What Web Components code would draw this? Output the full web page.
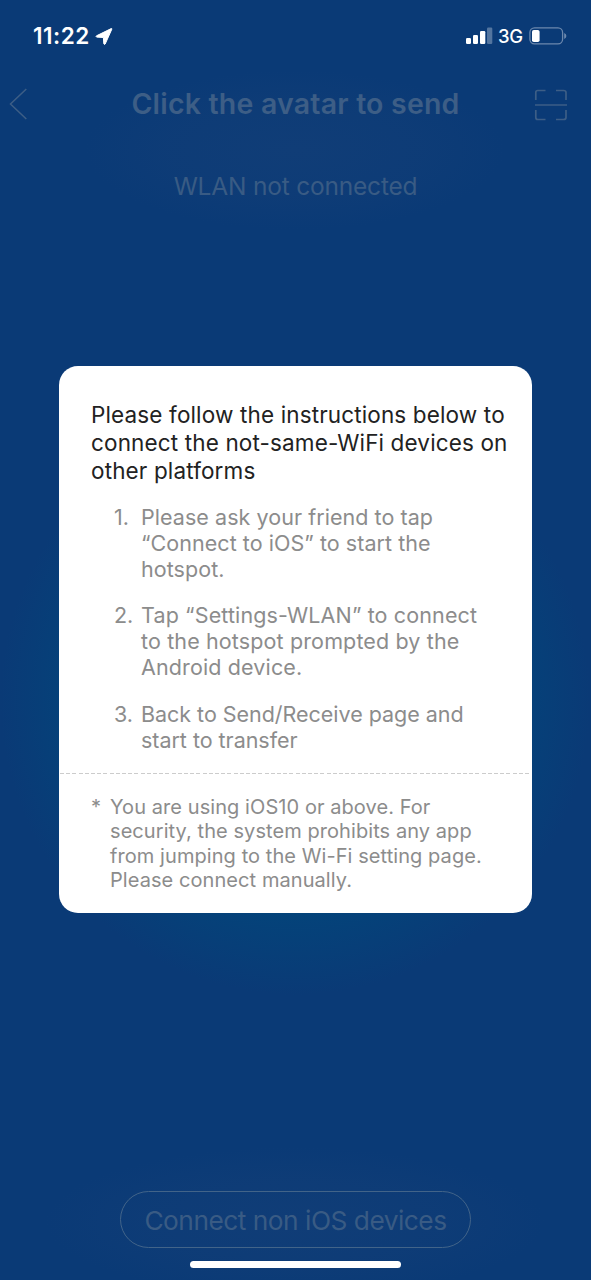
<!DOCTYPE html>
<html lang="en">
<head>
<meta charset="utf-8">
<meta name="viewport" content="width=device-width, initial-scale=1">
<title>Send</title>
<style>
    html, body
    {
        margin: 0;
        height: 100%;
        overflow: hidden;
        background: #0a3a76;
    }
    body
    {
        font-family: Inter, "Liberation Sans", sans-serif;
    }
</style>
</head>
<body>
<send-page>
    <status-bar slot="status" time="11:22" network="3G"></status-bar>
    <nav-bar slot="nav">Click the avatar to send</nav-bar>
    <span slot="state">WLAN not connected</span>
    <pill-button slot="action">Connect non iOS devices</pill-button>
    <help-dialog slot="dialog">
        <span slot="title">Please follow the instructions below to<br>connect the not-same-WiFi devices on<br>other platforms</span>
        <help-step num="1." style="--spacing: 0.05px">Please ask your friend to tap<br>“Connect to iOS” to start the<br>hotspot.</help-step>
        <help-step num="2." style="--spacing: 0.13px">Tap “Settings-WLAN” to connect<br>to the hotspot prompted by the<br>Android device.</help-step>
        <help-step num="3." style="--spacing: -0.03px">Back to Send/Receive page and<br>start to transfer</help-step>
        <span slot="note">You are using iOS10 or above. For<br>security, the system prohibits any app<br>from jumping to the Wi-Fi setting page.<br>Please connect manually.</span>
    </help-dialog>
</send-page>

<script>
function attach(element, html)
{
    var template = document.createElement("template");
    template.innerHTML = html;
    element.attachShadow({mode:"open"});
    element.shadowRoot.appendChild(template.content.cloneNode(true));
}

class SendPage extends HTMLElement
{
    constructor()
    {
        super();
        attach(this, `
            <style>
                :host
                {
                    position: relative;
                    display: flex;
                    flex-direction: column;
                    align-items: center;
                    box-sizing: border-box;
                    height: 1280px;
                    padding-bottom: 12px;
                    background:
                        radial-gradient(ellipse 210px 80px at 295px 150px, #103d77 0%, #103d7799 60%, #103d7700 100%),
                        radial-gradient(ellipse 250px 75px at 295px 1222px, #103d77 0%, #103d7799 60%, #103d7700 100%),
                        radial-gradient(circle 295px at 295px 700px, #04447a 0%, #04437a 72%, #0a3a76 100%),
                        #0a3a76;
                }
                .state
                {
                    margin-top: 35px;
                    font-size: 24.5px;
                    line-height: 30px;
                    letter-spacing: -0.2px;
                    color: #395b84;
                }
                .space
                {
                    flex: 1;
                }
                .home
                {
                    width: 211px;
                    height: 7px;
                    margin-top: 13px;
                    border-radius: 4px;
                    background: #fff;
                }
                .overlay
                {
                    position: absolute;
                    inset: 0 0 1px 0;
                    display: flex;
                    align-items: center;
                    justify-content: center;
                }
            </style>
            <slot name="status"></slot>
            <slot name="nav"></slot>
            <div class="state"><slot name="state"></slot></div>
            <div class="space"></div>
            <slot name="action"></slot>
            <div class="home"></div>
            <div class="overlay"><slot name="dialog"></slot></div>
        `);
    }
}

class StatusBar extends HTMLElement
{
    constructor()
    {
        super();
        attach(this, `
            <style>
                :host
                {
                    display: flex;
                    align-items: center;
                    align-self: stretch;
                    box-sizing: border-box;
                    height: 72px;
                    padding: 0 24px 0 33px;
                    color: #fff;
                }
                svg
                {
                    display: block;
                }
                #time
                {
                    flex: none;
                    width: 62px;
                    padding-bottom: 1px;
                    font-size: 22.5px;
                    font-weight: 600;
                    letter-spacing: 0.5px;
                }
                .space
                {
                    flex: 1;
                }
                #network
                {
                    margin: 0 6px 0 5px;
                    padding-bottom: 1px;
                    font-size: 18.5px;
                    font-weight: 500;
                    letter-spacing: -0.2px;
                }
            </style>
            <div id="time"></div>
            <svg width="18" height="20" viewBox="0 0 18 20"><path d="M16.8 3.2 L10.2 18 Q9.3 19 8.8 17.8 L8.4 11.5 L1.6 11.1 Q.6 10.6 1.5 9.8 L16.2 2.6 Q17.1 2.4 16.8 3.2Z" fill="#fff" stroke="#fff" stroke-width="1" stroke-linejoin="round"/></svg>
            <div class="space"></div>
            <svg width="27" height="18" viewBox="0 0 27 18" fill="#fff">
                <rect x="0" y="11" width="5" height="6" rx="1.2"/>
                <rect x="7" y="8" width="5" height="9" rx="1.2"/>
                <rect x="14" y="4" width="5.3" height="13" rx="1.2"/>
                <rect x="21" y=".5" width="5.3" height="16.5" rx="1.2" opacity=".3"/>
            </svg>
            <div id="network"></div>
            <svg width="38" height="18" viewBox="0 0 38 18">
                <rect x=".9" y=".9" width="32.7" height="16" rx="4.6" fill="none" stroke="#6c88ad" stroke-width="1.3"/>
                <rect x="3" y="3" width="7.6" height="12" rx="1.8" fill="#fff"/>
                <path d="M35.2 6 Q37.4 7 37.4 9 T35.2 12Z" fill="#6c88ad"/>
            </svg>
        `);
    }

    connectedCallback()
    {
        this.shadowRoot.querySelector("#time").textContent = this.getAttribute("time");
        this.shadowRoot.querySelector("#network").textContent = this.getAttribute("network");
    }
}

class NavBar extends HTMLElement
{
    constructor()
    {
        super();
        attach(this, `
            <style>
                :host
                {
                    display: flex;
                    align-items: center;
                    justify-content: space-between;
                    align-self: stretch;
                    box-sizing: border-box;
                    height: 64px;
                    padding: 0 23px 0 9px;
                    color: #3d5e86;
                }
                svg
                {
                    display: block;
                    fill: none;
                    stroke: #3d5e86;
                }
                .left, .right
                {
                    width: 34px;
                }
                .left
                {
                    margin-right: 14px;
                }
                .right
                {
                    padding-top: 2px;
                }
                .title
                {
                    padding-bottom: 1px;
                    font-size: 28.5px;
                    font-weight: 600;
                    letter-spacing: 0.2px;
                    white-space: nowrap;
                }
            </style>
            <div class="left"><svg width="19" height="32" viewBox="0 0 19 32"><path d="M17.3 1 L1.5 16 L17.3 31" stroke-width="1.5"/></svg></div>
            <div class="title"><slot></slot></div>
            <div class="right">
                <svg width="34" height="32" viewBox="0 0 34 32" stroke-width="1.7">
                    <path d="M1.8 11 V3.5 Q1.8 1.5 3.8 1.5 H11.5 M22 1.5 H29.5 Q32 1.5 32 3.5 V11 M32 21 V28.5 Q32 30.5 29.5 30.5 H22 M11.5 30.5 H3.8 Q1.8 30.5 1.8 28.5 V21 M1 16 H33"/>
                </svg>
            </div>
        `);
    }
}

class PillButton extends HTMLElement
{
    constructor()
    {
        super();
        attach(this, `
            <style>
                :host
                {
                    display: flex;
                    align-items: center;
                    justify-content: center;
                    box-sizing: border-box;
                    width: 351px;
                    height: 57px;
                    padding-top: 1px;
                    border: 1.5px solid #426489;
                    border-radius: 29px;
                    font-size: 26.3px;
                    letter-spacing: -0.5px;
                    white-space: nowrap;
                    color: #395b84;
                }
            </style>
            <slot></slot>
        `);
    }
}

class HelpDialog extends HTMLElement
{
    constructor()
    {
        super();
        attach(this, `
            <style>
                :host
                {
                    display: block;
                    box-sizing: border-box;
                    width: 473px;
                    height: 547px;
                    padding-top: 34.5px;
                    border-radius: 19px;
                    background: #fff;
                    color: #8c8c8c;
                    white-space: nowrap;
                }
                .title
                {
                    padding-left: 32px;
                    font-size: 22.5px;
                    line-height: 28px;
                    letter-spacing: 0.14px;
                    color: #222;
                }
                .steps
                {
                    display: flex;
                    flex-direction: column;
                    gap: 20.3px;
                    padding: 19.6px 0 0 55px;
                }
                .rule
                {
                    height: 1px;
                    margin: 20px 3px 0 1px;
                    background: repeating-linear-gradient(90deg, #ccc 0 4px, #fff 4px 6.2px);
                }
                .note
                {
                    display: flex;
                    padding: 21px 0 0 32px;
                    font-size: 20px;
                    line-height: 24.5px;
                    letter-spacing: 0.07px;
                }
                .star
                {
                    width: 19px;
                }
            </style>
            <div class="title"><slot name="title"></slot></div>
            <div class="steps"><slot></slot></div>
            <div class="rule"></div>
            <div class="note"><div class="star">*</div><slot name="note"></slot></div>
        `);
    }
}

class HelpStep extends HTMLElement
{
    constructor()
    {
        super();
        attach(this, `
            <style>
                :host
                {
                    display: flex;
                    font-size: 21.5px;
                    line-height: 26px;
                    letter-spacing: var(--spacing, 0);
                }
                #num
                {
                    width: 27px;
                    letter-spacing: 0;
                }
            </style>
            <div id="num"></div>
            <div><slot></slot></div>
        `);
    }

    connectedCallback()
    {
        this.shadowRoot.querySelector("#num").textContent = this.getAttribute("num");
    }
}

customElements.define("send-page", SendPage);
customElements.define("status-bar", StatusBar);
customElements.define("nav-bar", NavBar);
customElements.define("pill-button", PillButton);
customElements.define("help-dialog", HelpDialog);
customElements.define("help-step", HelpStep);
</script>
</body>
</html>
